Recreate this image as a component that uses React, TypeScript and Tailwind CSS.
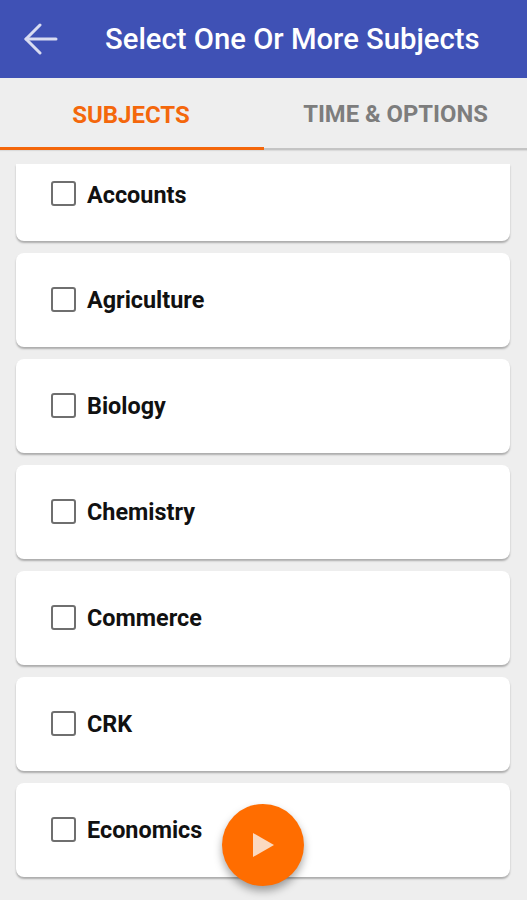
import React from "react";

const subjects = ["Agriculture", "Biology", "Chemistry", "Commerce", "CRK", "Economics"];

function SubjectRow({ name }: { name: string }) {
  return (
    <div className="flex items-center gap-[11px]">
      <span className="-mt-[2px] h-[25px] w-[25px] rounded-[3px] border-[2px] border-[#6f6f6f] bg-white" />
      <span className="relative top-[1px] text-[23.4px] font-bold leading-none text-[#111111]">{name}</span>
    </div>
  );
}

export default function App() {
  return (
    <div className="relative flex h-[900px] w-[527px] flex-col overflow-hidden bg-[#eeeeee] font-['Roboto',sans-serif]">
      <header className="flex h-[78px] shrink-0 items-center bg-[#3f51b5] pl-[23px]">
        <svg width="35" height="32" viewBox="0 0 35 32" fill="none" stroke="#d9dcf1" strokeWidth="3" strokeLinecap="round" strokeLinejoin="round">
          <path d="M33 16H3" />
          <path d="M17 2L3 16l14 14" />
        </svg>
        <h1 className="relative top-[1px] ml-[47px] whitespace-nowrap text-[29.25px] font-medium leading-none text-white">Select One Or More Subjects</h1>
      </header>

      <nav className="flex h-[72px] shrink-0 border-b-[2px] border-b-[#c4c4c4] pt-[4px] shadow-[0_1px_1px_rgba(0,0,0,0.08)]">
        <div className="-mb-[2px] -mt-[4px] flex w-[264px] items-center justify-center border-b-[3px] border-b-[#f4670b] pr-[2px] pt-[4px] text-[24px] font-bold text-[#f4670b]">
          SUBJECTS
        </div>
        <div className="flex flex-1 items-center justify-center text-[23.8px] font-bold text-[#7d7d7d]">TIME &amp; OPTIONS</div>
      </nav>

      <main className="mt-[14px] flex flex-col gap-[12px] pl-[16px] pr-[17px]">
        <div className="h-[77px] rounded-b-[8px] bg-white pl-[35px] pt-[19px] shadow-[0_2px_2px_rgba(0,0,0,0.28)]">
          <SubjectRow name="Accounts" />
        </div>
        {subjects.map((s) => (
          <div key={s} className="flex h-[94px] items-center rounded-[8px] bg-white pl-[35px] shadow-[0_2px_2px_rgba(0,0,0,0.28)]">
            <SubjectRow name={s} />
          </div>
        ))}
      </main>

      <button className="absolute left-[222px] top-[804px] flex h-[82px] w-[82px] items-center justify-center rounded-full bg-[#ff6d00] shadow-[0_5px_9px_rgba(0,0,0,0.35)]">
        <svg width="24" height="26" viewBox="0 0 24 26">
          <path d="M2 1l21 12L2 25z" fill="#fbd9c0" />
        </svg>
      </button>
    </div>
  );
}
